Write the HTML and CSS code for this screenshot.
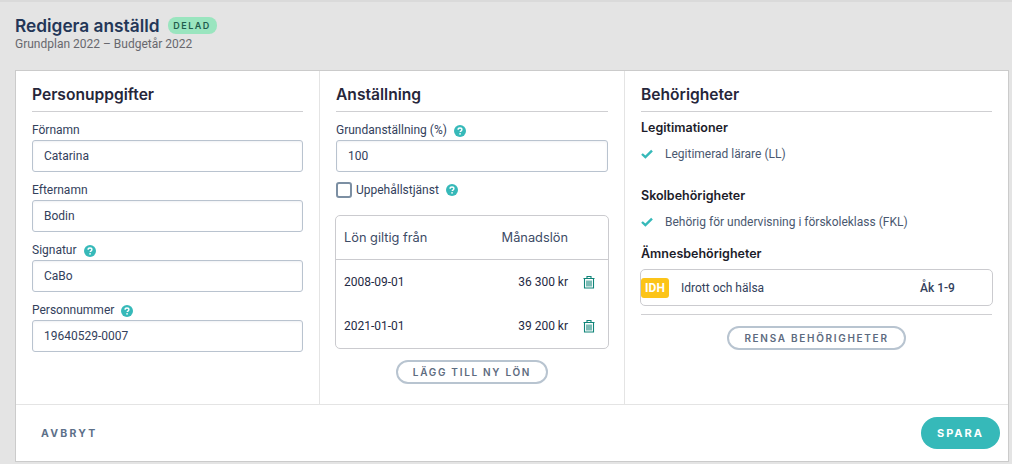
FILE: index.html
```html
<!DOCTYPE html>
<html lang="sv">
<head>
<meta charset="utf-8">
<title>Redigera anställd</title>
<link rel="stylesheet" href="styles.css">
</head>
<body>
<svg class="defs" width="0" height="0" aria-hidden="true">
  <symbol id="help" viewBox="0 0 12 12">
    <circle cx="6" cy="6" r="6" fill="#36b9b9"/>
    <path d="M4.1 4.7C4.1 3.6 4.9 3 6 3s1.9.6 1.9 1.6c0 .8-.5 1.2-1 1.5-.5.3-.7.5-.7 1" fill="none" stroke="#fff" stroke-width="1.4"/>
    <rect x="5.3" y="8.1" width="1.5" height="1.5" fill="#fff"/>
  </symbol>
  <symbol id="check" viewBox="0 0 12 10">
    <path d="M1 5l3.400 3.200L11 1.600" fill="none" stroke="#36b9b9" stroke-width="2.400"/>
  </symbol>
  <symbol id="trash" viewBox="0 0 12 14">
    <path d="M.5 3.500h11M4 3.500V1.500h4v2M1.500 3.500v9.500h9V3.500M4 5.500v6M6 5.500v6M8 5.500v6" fill="none" stroke="#0f8478" stroke-width="1.100"/>
  </symbol>
</svg>
<div class="page">
  <header class="head">
    <div class="title-row">
      <h1 class="title">Redigera anställd</h1>
      <span class="tag">DELAD</span>
    </div>
    <p class="sub">Grundplan 2022 – Budgetår 2022</p>
  </header>
  <main class="card">
    <div class="cols">
      <section class="col col-a">
        <h2 class="col-title">Personuppgifter</h2>
        <div class="field">
          <label class="label">Förnamn</label>
          <input class="input" value="Catarina">
        </div>
        <div class="field">
          <label class="label">Efternamn</label>
          <input class="input" value="Bodin">
        </div>
        <div class="field">
          <label class="label">Signatur <svg class="help"><use href="#help"/></svg></label>
          <input class="input" value="CaBo">
        </div>
        <div class="field">
          <label class="label">Personnummer <svg class="help"><use href="#help"/></svg></label>
          <input class="input" value="19640529-0007">
        </div>
      </section>
      <section class="col col-b">
        <h2 class="col-title">Anställning</h2>
        <div class="field">
          <label class="label">Grundanställning (%) <svg class="help"><use href="#help"/></svg></label>
          <input class="input" value="100">
        </div>
        <div class="check-row">
          <span class="box"></span>
          <span>Uppehållstjänst</span>
          <svg class="help"><use href="#help"/></svg>
        </div>
        <div class="salary">
          <div class="s-head">
            <span class="s-date">Lön giltig från</span>
            <span class="s-amt">Månadslön</span>
            <span class="s-act"></span>
          </div>
          <div class="s-row">
            <span class="s-date">2008-09-01</span>
            <span class="s-amt">36 300 kr</span>
            <span class="s-act"><svg class="trash"><use href="#trash"/></svg></span>
          </div>
          <div class="s-row">
            <span class="s-date">2021-01-01</span>
            <span class="s-amt">39 200 kr</span>
            <span class="s-act"><svg class="trash"><use href="#trash"/></svg></span>
          </div>
        </div>
        <div class="btn-row"><button class="ghost ghost-add">LÄGG TILL NY LÖN</button></div>
      </section>
      <section class="col col-c">
        <h2 class="col-title">Behörigheter</h2>
        <h3 class="sub-title st-a">Legitimationer</h3>
        <div class="cert"><svg class="check"><use href="#check"/></svg>Legitimerad lärare (LL)</div>
        <h3 class="sub-title st-b">Skolbehörigheter</h3>
        <div class="cert"><svg class="check"><use href="#check"/></svg>Behörig för undervisning i förskoleklass (FKL)</div>
        <h3 class="sub-title st-c">Ämnesbehörigheter</h3>
        <div class="subject">
          <span class="idh">IDH</span>
          <span class="s-name">Idrott och hälsa</span>
          <span class="s-grade">Åk 1-9</span>
        </div>
        <div class="btn-row btn-clear"><button class="ghost ghost-clear">RENSA BEHÖRIGHETER</button></div>
      </section>
    </div>
    <footer class="foot">
      <button class="cancel">AVBRYT</button>
      <button class="save">SPARA</button>
    </footer>
  </main>
</div>
</body>
</html>
```
FILE: styles.css
```css
* { box-sizing: border-box; }
html, body { margin: 0; height: 100%; }
body {
  background: #e4e4e4;
  font-family: Roboto, "Liberation Sans", sans-serif;
  font-size: 12px;
  color: #33415c;
  overflow: hidden;
}
.defs { position: absolute; }
.page {
  height: 464px;
  border-top: 2px solid #dadada;
  padding: 0 3px 0 15px;
}
.head { height: 68px; padding-top: 13px; }
.title-row { display: flex; align-items: center; gap: 8px; height: 20px; }
.title {
  margin: 0;
  font-family: Inter, sans-serif;
  font-size: 17.3px;
  font-weight: 600;
  color: #233657;
}
.tag {
  width: 49px;
  text-align: center;
  background: #9ae5bf;
  color: #1f5c4d;
  font-family: Inter, sans-serif;
  font-size: 9px;
  font-weight: 600;
  letter-spacing: 1.5px;
  height: 17px;
  line-height: 17px;
  border-radius: 8px;
}
.sub { margin: 2px 0 0; font-size: 12px; line-height: 14px; color: #68686e; }
.card {
  height: 392px;
  background: #fff;
  border: 1px solid #cbcbcb;
  display: flex;
  flex-direction: column;
}
.cols { display: flex; height: 334px; border-bottom: 1px solid #e4e4e4; }
.col { padding: 13px 16px 0; border-right: 1px solid #e4e4e4; }
.col-a { width: 304px; }
.col-b { width: 305px; }
.col-c { flex: 1; border-right: 0; }
.col-title {
  margin: 0 0 8px;
  height: 28px;
  line-height: 22px;
  border-bottom: 1px solid #cfcfd2;
  font-family: Inter, sans-serif;
  font-size: 15.6px;
  font-weight: 600;
  color: #26263a;
}
.field { height: 60px; padding-top: 2px; }
.label {
  display: flex;
  align-items: center;
  gap: 7px;
  height: 18px;
  padding-bottom: 1px;
  line-height: 17px;
  color: #33415c;
  font-size: 12px;
}
.help { width: 12px; height: 12px; flex: none; }
.input {
  display: block;
  width: 100%;
  height: 32px;
  padding: 0 11px;
  border: 1px solid #b9c3cf;
  border-radius: 3px;
  background: #fff;
  font: 12px Roboto, sans-serif;
  color: #33415c;
  box-shadow: inset 0 1px 2px rgba(60, 80, 110, .08);
}
.check-row {
  display: flex;
  align-items: center;
  height: 16px;
  margin-top: 2px;
  gap: 4px;
  color: #33415c;
}
.check-row .help { margin-left: 3px; }
.box {
  width: 16px;
  height: 16px;
  border: 2px solid #7c8fa3;
  border-radius: 3px;
}
.salary {
  margin: 17px -1px 0;
  border: 1px solid #cbcbcf;
  border-radius: 5px;
  height: 134px;
}
.s-head, .s-row {
  display: flex;
  align-items: center;
  height: 44px;
  padding-left: 8px;
}
.s-head {
  border-bottom: 1px solid #cbcbcf;
  font-family: Inter, sans-serif;
  color: #3d4b66;
  font-size: 12.8px;
  font-weight: 400;
}
.s-row { color: #1f2a44; }
.s-date { flex: 1; }
.s-amt { text-align: right; }
.s-act { width: 40px; display: flex; justify-content: center; padding-left: 2px; }
.trash { width: 12px; height: 14px; }
.btn-row { display: flex; justify-content: center; margin-top: 11px; }
.ghost {
  height: 24px;
  padding: 0;
  background: #fff;
  border: 2px solid #b8c4d0;
  border-radius: 12px;
  font-family: Inter, sans-serif;
  font-size: 10px;
  font-weight: 600;
  letter-spacing: 1.7px;
  color: #5d6b80;
}
.ghost-add { width: 152px; }
.ghost-clear { width: 179px; }
.sub-title {
  margin: 0;
  height: 17px;
  line-height: 17px;
  font-family: Inter, sans-serif;
  font-size: 12.5px;
  font-weight: 600;
  color: #1c1c2a;
}
.st-a { margin-top: -1px; }
.st-b { margin-top: 25px; }
.st-c { margin-top: 15px; }
.cert {
  display: flex;
  align-items: center;
  height: 17px;
  margin-top: 9px;
  color: #4a5870;
  font-size: 12px;
}
.check { width: 12px; height: 10px; margin-right: 12px; }
.subject {
  display: flex;
  align-items: center;
  height: 37px;
  margin: 7px -1px 0;
  border: 1px solid #cbcbcf;
  border-radius: 5px;
  color: #33415c;
}
.idh {
  width: 28px;
  height: 20px;
  line-height: 20px;
  text-align: center;
  background: #fcc419;
  border-radius: 3px;
  color: #fff;
  font-weight: 700;
  font-size: 12px;
}
.s-name { margin-left: 12px; width: 239px; }
.s-grade { font-weight: 500; }
.btn-clear {
  margin-top: 8px;
  padding-top: 11px;
  border-top: 1px solid #cfcfd2;
}
.foot {
  flex: 1;
  display: flex;
  align-items: center;
  justify-content: space-between;
  padding: 0 8px 0 25px;
}
.cancel {
  padding: 0;
  background: none;
  border: 0;
  font-family: Inter, sans-serif;
  font-size: 10.5px;
  font-weight: 700;
  letter-spacing: 2.2px;
  color: #5d7089;
}
.save {
  width: 79px;
  height: 32px;
  background: #36b9b9;
  border: 0;
  border-radius: 16px;
  font-family: Inter, sans-serif;
  font-size: 11px;
  font-weight: 700;
  letter-spacing: 2px;
  color: #fff;
}
```
